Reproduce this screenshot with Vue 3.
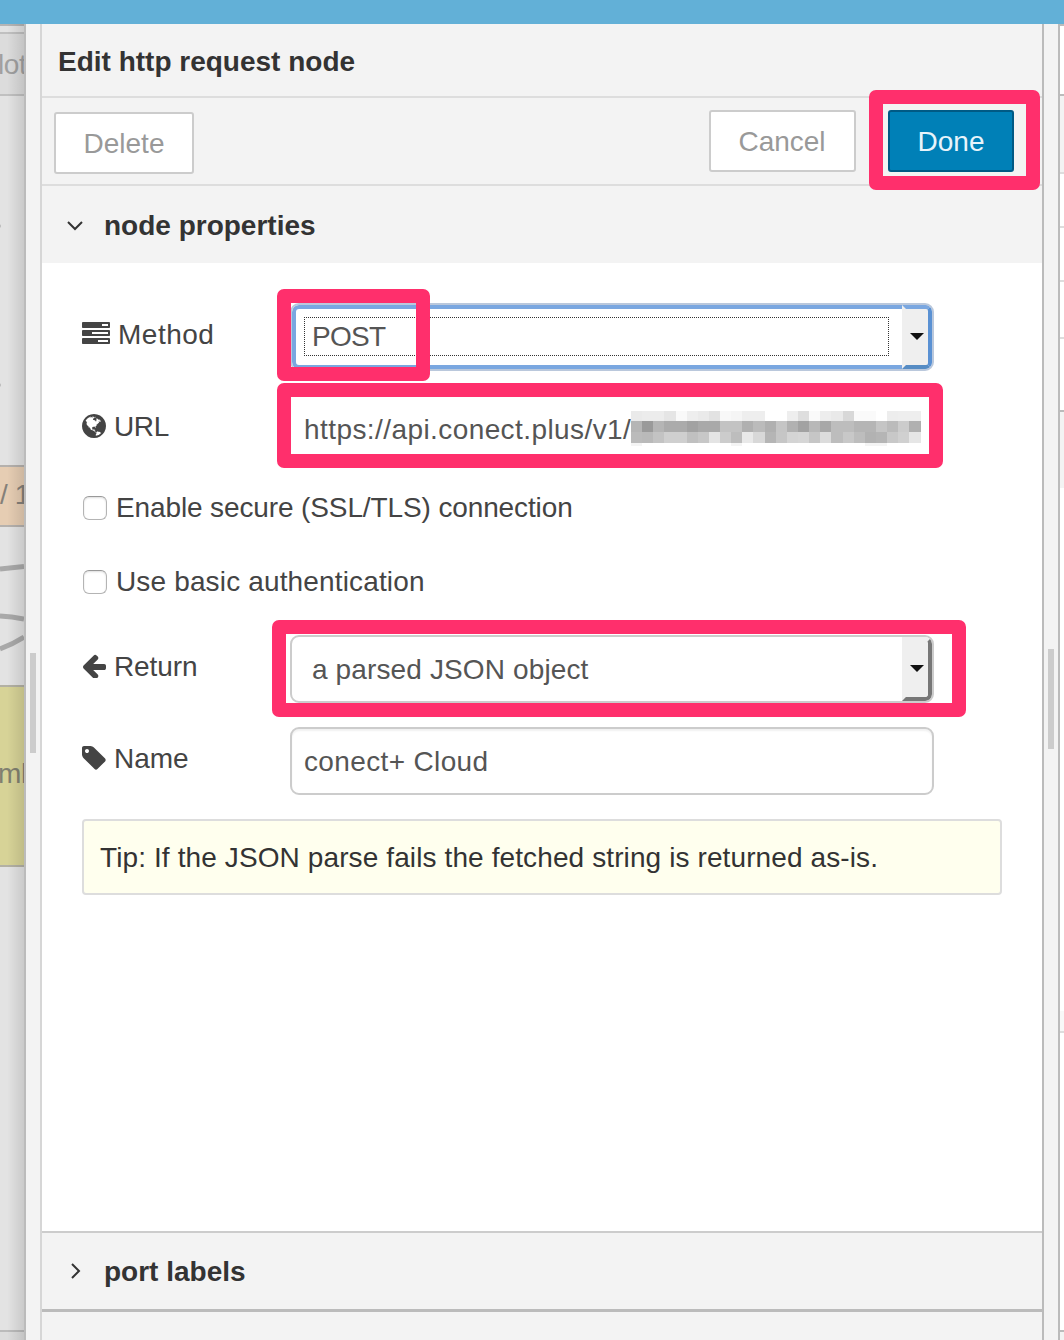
<script setup>
const icons = {
  tasks:
    'M1024 1408h640v-128h-640v128zm-384-512h1024v-128h-1024v128zm640-512h384v-128h-384v128zm512 832v256q0 26-19 45t-45 19h-1664q-26 0-45-19t-19-45v-256q0-26 19-45t45-19h1664q26 0 45 19t19 45zm0-512v256q0 26-19 45t-45 19h-1664q-26 0-45-19t-19-45v-256q0-26 19-45t45-19h1664q26 0 45 19t19 45zm0-512v256q0 26-19 45t-45 19h-1664q-26 0-45-19t-19-45v-256q0-26 19-45t45-19h1664q26 0 45 19t19 45z',
  globe:
    'M896 128q209 0 385.500 103t279.500 279.500 103 385.500-103 385.500-279.500 279.500-385.500 103-385.500-103-279.500-279.500-103-385.500 103-385.500 279.500-279.500 385.500-103zm274 521q-2 1-9.500 9.500t-13.500 9.500q2 0 4.500-5t5-11 3.500-7q6-7 22-15 14-6 52-12 34-8 51 11-2-2 9.500-13t14.500-12q3-2 15-4.500t15-7.500l2-22q-12 1-17.500-7t-6.500-21q0 2-6 8 0-7-4.500-8t-11.500 1-9 1q-10-3-15-7.500t-8-16.500-4-15q-2-5-9.500-11t-9.500-10q-1-2-2.500-5.500t-3-6.500-4-5.500-5.500-2.500-7 5-7.500 10-4.500 5q-3-2-6-1.500t-4.500 1-4.500 3-5 3.500q-3 2-8.500 3t-8.500 2q15-5-1-11-10-4-16-3 9-4 7.500-12t-8.500-14h5q-1-4-8.500-8.500t-17.500-8.500-13-6q-8-5-34-9.500t-33-.5q-5 6-4.500 10.500t4 14 3.500 12.500q1 6-5.500 13t-6.500 12q0 7 14 15.500t10 21.500q-3 8-16 16t-16 12q-5 8-1.500 18.500t10.500 16.500q2 2 1.500 4t-3.500 4.500-5.500 4-6.500 3.500l-3 2q-11 5-20.500-6t-13.500-26q-7-25-16-30-23-8-29 1-5-13-41-26-25-9-58-4 6-1 0-15-7-15-19-12 3-6 4-17.500t1-13.500q3-13 12-23 1-1 7-8.500t9.500-13.500.5-6q35 4 50-11 5-5 11.500-17t10.500-17q9-6 14-5.500t14.500 5.500 14.500 5q14 1 15.500-11t-7.500-20q12 1 3-17-4-7-8-9-12-4-27 5-8 4 2 8-1-1-9.500 10.500t-16.500 17.500-16-5q-1-1-5.500-13.500t-9.500-13.500q-8 0-16 15 3-8-11-15t-24-8q19-12-8-27-7-4-20.500-5t-19.500 4q-5 7-5.500 11.500t5 8 10.500 5.500 11.500 4 8.500 3q14 10 8 14-2 1-8.500 3.500t-11.500 4.500-6 4q-3 4 0 14t-2 14q-5-5-9-17.500t-7-16.500q7 9-25 6l-10-1q-4 0-16 2t-20.500 1-13.500-8q-4-8 0-20 1-4 4-2-4-3-11-9.500t-10-8.500q-46 15-94 41 6 1 12-1 5-2 13-6.500t10-5.500q34-14 42-7l5-5q14 16 20 25-7-4-30-1-20 6-22 12 7 12 5 18-4-3-11.500-10t-14.500-11-15-5q-16 0-22 1-146 80-235 222 7 7 12 8 4 1 5 9t2.500 11 11.500-3q9 8 3 19 1-1 44 27 19 17 21 21 3 11-10 18-1-2-9-9t-9-4q-3 5 .5 18.500t10.500 12.500q-7 0-9.500 16t-2.500 35.500-1 23.500l2 1q-3 12 5.500 34.500t21.500 19.500q-13 3 20 43 6 8 8 9 3 2 12 7.500t15 10 10 10.500q4 5 10 22.500t14 23.500q-2 6 9.500 20t10.500 23q-1 0-2.500 1t-2.500 1q3 7 15.500 14t15.500 13q1 3 2 10t3 11 8 2q2-20-24-62-15-25-17-29-3-5-5.500-15.500t-4.500-14.500q2 0 6 1.500t8.500 3.500 7.500 4 2 3q-3 7 2 17.500t12 18.500 17 19 12 13q6 6 14 19.500t0 13.500q9 0 20 10.500t17 19.500q5 8 8 26t5 24q2 7 8.500 13.500t12.500 9.500l16 8 13 7q5 2 18.500 10.500t21.500 11.500q10 4 16 4t14.500-2.500 13.500-3.500q15-2 29 15t21 21q36 19 55 11-2 1 .5 7.500t8 15.500 9 14.500 5.500 8.500q5 6 18 15t18 15q6-4 7-9-3 8 7 20t18 10q14-3 14-32-31 15-49-18 0-1-2.500-5.500t-4-8.500-2.500-8.500 0-7.500 5-3q9 0 10-3.500t-2-12.500-4-13q-1-8-11-20t-12-15q-5 9-16 8t-16-9q0 1-1.500 5.500t-1.500 6.500q-13 0-15-1 1-3 2.500-17.500t3.500-22.500q1-4 5.500-12t7.500-14.500 4-12.500-4.500-9.500-17.500-2.500q-19 1-26 20-1 3-3 10.500t-5 11.500-9 7q-7 3-24 2t-24-5q-13-8-22.500-29t-9.500-37q0-10 2.500-26.500t3-25-5.500-24.500q3-2 9-9.500t10-10.500q2-1 4.500-1.500t4.500 0 4-1.500 3-6q-1-1-4-3-3-3-4-3 7 3 28.500-1.500t27.500 1.500q15 11 22-2 0-1-2.500-9.500t-.5-13.500q5 27 29 9 3 3 15.500 5t17.500 5q3 2 7 5.500t5.500 4.500 5-.5 8.500-6.500q10 14 12 24 11 40 19 44 7 3 11 2t4.500-9.500 0-14-1.500-12.500l-1-8v-18l-1-8q-15-3-18.500-12t1.500-18.500 15-18.500q1-1 8-3.500t15.500-6.500 12.500-8q21-19 15-35 7 0 11-9-1 0-5-3t-7.500-5-4.500-2q9-5 2-16 5-3 7.500-11t7.500-10q9 12 21 2 8-8 1-16 5-7 20.500-10.500t18.500-9.500q7 2 8-2t1-12 3-12q4-5 15-9t13-5l17-11q3-4 0-4 18 2 31-11 10-11-6-20 3-6-3-9.500t-15-5.500q3-1 11.500-.5t10.500-1.500q15-10-7-16-17-5-43 12zm-163 877q206-36 351-189-3-3-12.500-4.500t-12.500-3.500q-18-7-24-8 1-7-2.500-13t-8-9-12.500-8-11-7q-2-2-7-6t-7-5.500-7.500-4.500-8.500-2-10 1l-3 1q-3 1-5.500 2.500t-5.500 3-4 3 0 2.500q-21-17-36-22-5-1-11-5.500t-10.500-7-10-1.500-11.500 7q-5 5-6 15t-2 13q-7-5 0-17.500t2-18.500q-3-6-10.500-4.500t-12 4.500-11.500 8.500-9 6.500-8.500 5.500-8.500 7.500q-3 4-6 12t-5 11q-2-4-11.500-6.500t-9.500-5.500q2 10 4 35t5 38q7 31-12 48-27 25-29 40-4 22 12 26 0 7-8 20.500t-7 21.500q0 6 2 16z',
  arrow:
    'M1664 896v128q0 53-32.500 90.500t-84.500 37.500h-704l293 294q38 36 38 90t-38 90l-75 76q-37 37-90 37-52 0-91-37l-651-652q-37-37-37-90 0-52 37-91l651-650q38-38 91-38 52 0 90 38l75 74q38 38 38 91t-38 91l-293 293h704q52 0 84.500 37.500t32.500 90.500z',
  tag:
    'M576 448q0-53-37.500-90.500t-90.500-37.500-90.500 37.500-37.500 90.500 37.500 90.500 90.500 37.500 90.500-37.500 37.500-90.500zm1067 576q0 53-37 90l-491 492q-39 37-91 37-53 0-90-37l-715-716q-38-37-64.500-101t-26.500-117v-416q0-52 38-90t90-38h416q53 0 117 26.500t102 64.500l715 714q37 39 37 91z',
}

// Grey levels of the pixelated part of the URL, one list per band
const bands = [
  { y: 0, h: 10, cells: 'ea ec ec e5 f9 ee ea e2 f8 f5 ee ee ff ff ee de fa ed e9 d8 fa fa ff ed ee ee' },
  { y: 10, h: 11, cells: 'b5 9a b5 ab ab a2 a9 a9 c3 c3 b0 bb b0 c5 b1 a2 b8 a8 bd bd b5 b5 b5 c5 bb cc b0' },
  { y: 21, h: 11, cells: 'bb b9 c3 cf cf c0 c7 e4 cc bd e9 d8 b5 c6 d4 d6 c6 dc bd c8 bd b2 b5 c8 d0 e6' },
  { y: 32, h: 2.5, cells: 'f4 ff ff ff ff ff ff ff ff f4 ff ff ff ff ff ff ff ff ff ff ff f4 f4 ff ff ff' },
]
// The middle band ends in the darker last cell
bands[1].cells = 'b5 9a b5 ab ab a2 a9 a9 c3 c3 b0 bb b0 c5 b1 a2 b8 a8 bd bd b5 b5 c5 bb cc b0'
const step = 289.5 / 26
const mosaic = bands.flatMap((b) =>
  b.cells.split(' ').map((v, i) => ({ x: i * step, y: b.y, h: b.h, fill: `#${v}${v}${v}` }))
)
</script>

<template>
  <div class="screen">
    <div class="topbar"></div>
    <div class="workspace">
      <svg class="canvas" width="24" height="1316" viewBox="0 24 24 1316">
        <defs>
          <linearGradient id="edge" x1="0" x2="1" y1="0" y2="0">
            <stop offset="0.3" stop-color="#000" stop-opacity="0" />
            <stop offset="1" stop-color="#000" stop-opacity="0.11" />
          </linearGradient>
        </defs>
        <rect y="24" width="24" height="1316" fill="#e3e3e3" />
        <rect y="24" width="24" height="2" fill="#b5b5b5" />
        <rect y="32" width="24" height="64" fill="#c0c0c0" />
        <rect y="34" width="24" height="60" fill="#dcdcdc" />
        <text x="-2" y="74" fill="#a0a0a0">lot</text>
        <circle cx="-1" cy="226" r="2" fill="#bbb" />
        <circle cx="-1" cy="385" r="2" fill="#bbb" />
        <rect y="465" width="24" height="62" fill="#b5b1ad" />
        <rect y="467" width="24" height="58" fill="#e6cdb3" />
        <text x="0" y="503.700" fill="#858079">/ 1</text>
        <path d="M0 569 L24 566.500 M0 616 Q12 616.500 24 619 M0 649 Q13 644 24 637" fill="none" stroke="#a9a9a9" stroke-width="5" />
        <rect y="685" width="24" height="182" fill="#b3b1a4" />
        <rect y="687" width="24" height="178" fill="#d7d397" />
        <text x="-2" y="783" fill="#808070">ml</text>
        <rect y="1330" width="24" height="2" fill="#bbb" />
        <rect y="1332" width="24" height="8" fill="#dcdcdc" />
        <rect y="24" width="24" height="1316" fill="url(#edge)" />
      </svg>
      <div class="gutter left"><i class="grip"></i></div>

      <main class="tray">
        <header class="title">Edit http request node</header>
        <div class="toolbar">
          <button class="btn delete">Delete</button>
          <button class="btn cancel">Cancel</button>
          <button class="btn done">Done<span class="mark mark-done"></span></button>
        </div>
        <div class="section">
          <svg width="20" height="20" viewBox="0 0 20 20"><path d="M3 7 L10 14 L17 7" /></svg>
          <span>node properties</span>
        </div>
        <div class="form">
          <div class="row">
            <label class="l-method"><svg width="28" height="28" viewBox="0 0 1792 1792"><path :d="icons.tasks" /></svg><span>Method</span></label>
            <div class="select focused">
              <span class="value">POST</span>
              <span class="arrow"><svg width="14" height="7" viewBox="0 0 14 7"><path d="M0 0H14L7 7Z" /></svg></span>
            </div>
            <span class="mark mark-method"></span>
          </div>
          <div class="row">
            <label class="l-url"><svg width="24" height="24" viewBox="128 128 1536 1536"><path :d="icons.globe" /></svg><span>URL</span></label>
            <div class="input url">
              <span class="address">https://api.conect.plus/v1/</span>
              <svg class="mosaic" width="290" height="35" shape-rendering="crispEdges">
                <rect v-for="(c, i) in mosaic" :key="i" :x="c.x" :y="c.y" :width="step + 0.2" :height="c.h" :fill="c.fill" />
              </svg>
            </div>
            <span class="mark mark-url"></span>
          </div>
          <div class="check ssl"><i class="box"></i><span>Enable secure (SSL/TLS) connection</span></div>
          <div class="check auth"><i class="box"></i><span>Use basic authentication</span></div>
          <div class="row">
            <label class="l-return"><svg width="24" height="24" viewBox="128 128 1536 1536"><path :d="icons.arrow" /></svg><span>Return</span></label>
            <div class="select">
              <span class="value">a parsed JSON object</span>
              <span class="arrow"><svg width="14" height="7" viewBox="0 0 14 7"><path d="M0 0H14L7 7Z" /></svg></span>
            </div>
            <span class="mark mark-return"></span>
          </div>
          <div class="row">
            <label><svg width="24" height="24" viewBox="128 128 1536 1536"><path :d="icons.tag" /></svg><span>Name</span></label>
            <div class="input name">conect+ Cloud</div>
          </div>
          <div class="tip">Tip: If the JSON parse fails the fetched string is returned as-is.</div>
        </div>
        <div class="section ports">
          <svg width="20" height="20" viewBox="0 0 20 20"><path d="M7 3 L14 10 L7 17" /></svg>
          <span>port labels</span>
        </div>
      </main>

      <div class="gutter right"><i class="grip"></i></div>
      <svg class="sidebar" width="4" height="1316" viewBox="0 24 4 1316">
        <rect y="24" width="4" height="1316" fill="#fff" />
        <rect y="24" width="4" height="2" fill="#bbb" />
        <rect y="94" width="4" height="2" fill="#bbb" />
        <rect y="96" width="4" height="76" fill="#f3f3f3" />
        <rect v-for="y in [172, 226, 280, 337, 1031]" :key="y" :y="y" width="4" height="2" fill="#ddd" />
        <rect y="410" width="4" height="2" fill="#bbb" />
        <rect y="412" width="4" height="76" fill="#f3f3f3" />
        <rect y="1011" width="4" height="20" fill="#f8f8f8" />
        <rect y="1330" width="4" height="2" fill="#bbb" />
        <rect y="1332" width="4" height="8" fill="#f3f3f3" />
      </svg>
    </div>
  </div>
</template>

<style>
body {
  margin: 0;
  overflow: hidden;
}
</style>

<style scoped>
* {
  box-sizing: border-box;
}
.screen {
  width: 1064px;
  height: 1340px;
  overflow: hidden;
  background: #f3f3f3;
  color: #444;
  font: 28px/34px "Liberation Sans", Arial, sans-serif;
}
.topbar {
  height: 24px;
  background: #62b0d7;
}
.workspace {
  display: flex;
  height: 1316px;
}
.canvas,
.sidebar {
  flex: none;
  display: block;
}
.canvas text {
  letter-spacing: -0.4px;
}
.gutter {
  flex: none;
  width: 18px;
  border-left: 2px solid #bbb;
  border-right: 2px solid #d6d6d6;
  background: #f3f3f3;
}
.gutter.right {
  border-right-color: #bbb;
}
.grip {
  display: block;
  width: 6px;
  height: 100px;
  margin: 629px 0 0 4px;
  background: #ccc;
}
.gutter.right .grip {
  margin-top: 625px;
}
.tray {
  width: 1000px;
  display: flex;
  flex-direction: column;
  background: #f3f3f3;
}
.title {
  height: 74px;
  padding: 1px 0 0 16px;
  border-bottom: 2px solid #ddd;
  color: #333;
  font-weight: bold;
  line-height: 74px;
}
.toolbar {
  display: flex;
  height: 88px;
  padding: 12px 28px 0 12px;
  border-bottom: 2px solid #ddd;
}
.btn {
  position: relative;
  height: 62px;
  padding: 2px 0 0;
  border: 2px solid #ccc;
  border-radius: 3px;
  background: #fff;
  color: #999;
  font: inherit;
}
.delete {
  width: 140px;
  margin-top: 2px;
}
.cancel {
  width: 147px;
  margin-left: auto;
  padding-right: 1px;
}
.done {
  width: 126px;
  margin-left: 32px;
  border-color: #005a85;
  background: #0080b7;
  color: #e8f4fb;
}
.section {
  display: flex;
  align-items: center;
  height: 77px;
  padding-left: 23px;
  color: #333;
  font-weight: bold;
}
.section span {
  padding-top: 2px;
}
.section svg {
  flex: none;
  margin-right: 19px;
  fill: none;
  stroke: #333;
  stroke-width: 2;
}
.form {
  flex: none;
  height: 968px;
  padding: 40px 40px 0;
  background: #fff;
}
.row {
  position: relative;
  display: flex;
  height: 68px;
  margin-bottom: 24px;
}
label {
  display: flex;
  align-items: center;
  gap: 8px;
  width: 208px;
  height: 62px;
}
label span,
.check span {
  padding-top: 2px;
}
label svg {
  fill: #444;
}
.l-method {
  letter-spacing: 0.5px;
}
.l-url {
  letter-spacing: -0.4px;
}
.l-return {
  letter-spacing: -0.1px;
}
.input,
.select {
  display: flex;
  align-items: center;
  width: 644px;
  height: 68px;
  border: 2px solid #ccc;
  border-radius: 9px;
  background: #fff;
  color: #555;
}
.input {
  padding: 2px 0 0 12px;
  box-shadow: inset 0 2px 2px #f1f1f1;
}
.name {
  letter-spacing: 0.36px;
}
.url {
  border-color: transparent;
  box-shadow: none;
}
.address {
  flex: none;
  width: 327px;
  letter-spacing: 0.42px;
}
.mosaic {
  flex: none;
  margin-top: -3px;
}
.select {
  overflow: hidden;
}
.value {
  flex: 1;
  padding: 2px 0 0 20px;
  letter-spacing: 0.13px;
}
.arrow {
  flex: none;
  display: flex;
  align-items: center;
  justify-content: center;
  width: 30px;
  height: 64px;
  border: 4px solid #777;
  border-top-color: transparent;
  border-left-color: transparent;
  border-radius: 0 6px 6px 0;
  background: #efefef;
}
.arrow svg {
  margin-top: -1px;
  fill: #111;
}
.focused {
  border-color: #bac8dc;
  box-shadow: inset 0 0 0 4px #7aa7e0;
}
.focused .value {
  flex: none;
  width: 585px;
  height: 39px;
  margin: -1px 13px 0 12px;
  padding: 0 0 0 7px;
  border: 1px dotted #333;
  line-height: 38px;
  letter-spacing: -0.75px;
}
.focused .arrow {
  border-color: #7aa7e0 #5a91d3 #568cc4 transparent;
}
.focused .arrow svg {
  margin-top: -2px;
}
.check {
  display: flex;
  align-items: center;
  gap: 9px;
  height: 40px;
  margin-bottom: 34px;
}
.ssl {
  letter-spacing: -0.12px;
}
.auth {
  letter-spacing: 0.15px;
}
.box {
  width: 24px;
  height: 24px;
  margin: 2px 0 0 1px;
  border: 1px solid #b4b4b4;
  border-top-color: #999;
  border-radius: 6px;
  box-shadow: inset 0 1px 2px #ddd;
}
.tip {
  height: 76px;
  padding: 1px 0 0 16px;
  border: 2px solid #ddd;
  border-radius: 4px;
  background: #ffffee;
  color: #333;
  line-height: 72px;
  letter-spacing: 0.11px;
}
.ports {
  height: 81px;
  border-top: 2px solid #ccc;
  border-bottom: 3px solid #bbb;
}
.mark {
  position: absolute;
  z-index: 2;
  border: 14px solid #ff2f6c;
  border-radius: 7px;
}
.mark-done {
  left: -21px;
  top: -22px;
  width: 171px;
  height: 100px;
}
.mark-method {
  left: 195px;
  top: -14px;
  width: 153px;
  height: 92px;
}
.mark-url {
  left: 195px;
  top: -12px;
  width: 666px;
  height: 85px;
}
.mark-return {
  left: 190px;
  top: -15px;
  width: 694px;
  height: 97px;
}
</style>
